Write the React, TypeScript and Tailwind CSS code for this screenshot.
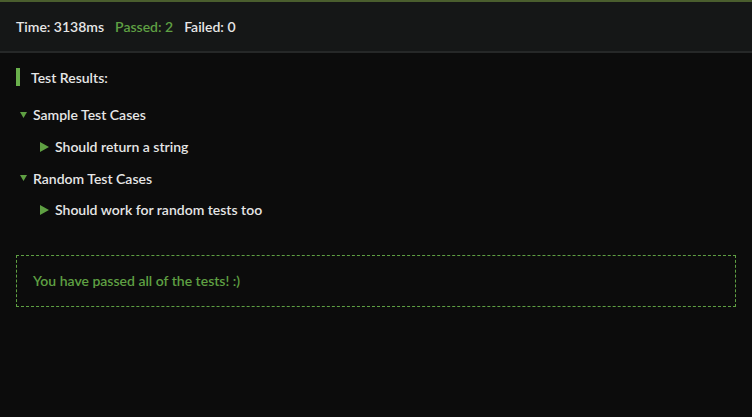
import React from 'react';

type Group = { title: string; tests: string[] };

const groups: Group[] = [
    { title: 'Sample Test Cases', tests: ['Should return a string'] },
    { title: 'Random Test Cases', tests: ['Should work for random tests too'] },
];

export default function App() {
    return (
        <div
            className="h-[417px] w-[752px] overflow-hidden bg-[#0c0c0c] text-[14px] font-semibold text-[#e6e6e6]"
            style={{ fontFamily: 'Lato, "Open Sans", sans-serif' }}
        >
            {/* summary bar */}
            <div className="border-t-2 border-b-2 border-t-[#4a5e2e] border-b-[#262828] bg-[#151717]">
                <div className="flex h-[49px] items-center gap-[11px] px-4">
                    <span>Time: 3138ms</span>
                    <span className="text-[#5fa043]">Passed: 2</span>
                    <span>Failed: 0</span>
                </div>
            </div>

            <div className="px-4 pt-[15px]">
                <div className="flex h-[18px] items-center gap-[11px]">
                    <div className="h-[18px] w-[4px] bg-[#6ab04c]" />
                    <span>Test Results:</span>
                </div>

                <div className="mt-[13px]">
                    {groups.map((g) => (
                        <div key={g.title}>
                            <div className="flex h-[31.7px] items-center">
                                <svg width="7" height="6" viewBox="0 0 7 6" className="ml-[4px] mr-[6px]">
                                    <path d="M0 0 L7 0 L3.5 6 Z" fill="#5fa043" />
                                </svg>
                                <span>{g.title}</span>
                            </div>
                            {g.tests.map((t) => (
                                <div key={t} className="flex h-[31.7px] items-center pl-[24px]">
                                    <svg width="9" height="10" viewBox="0 0 9 10" className="mr-[6px]">
                                        <path d="M0 0 L9 5 L0 10 Z" fill="#5fa043" />
                                    </svg>
                                    <span>{t}</span>
                                </div>
                            ))}
                        </div>
                    ))}
                </div>

                {/* passed message */}
                <div className="mt-[29px] flex h-[52px] w-[720px] items-center border border-dashed border-[#5fa043] px-4">
                    <span className="text-[#5fa043]">You have passed all of the tests! :)</span>
                </div>
            </div>
        </div>
    );
}
